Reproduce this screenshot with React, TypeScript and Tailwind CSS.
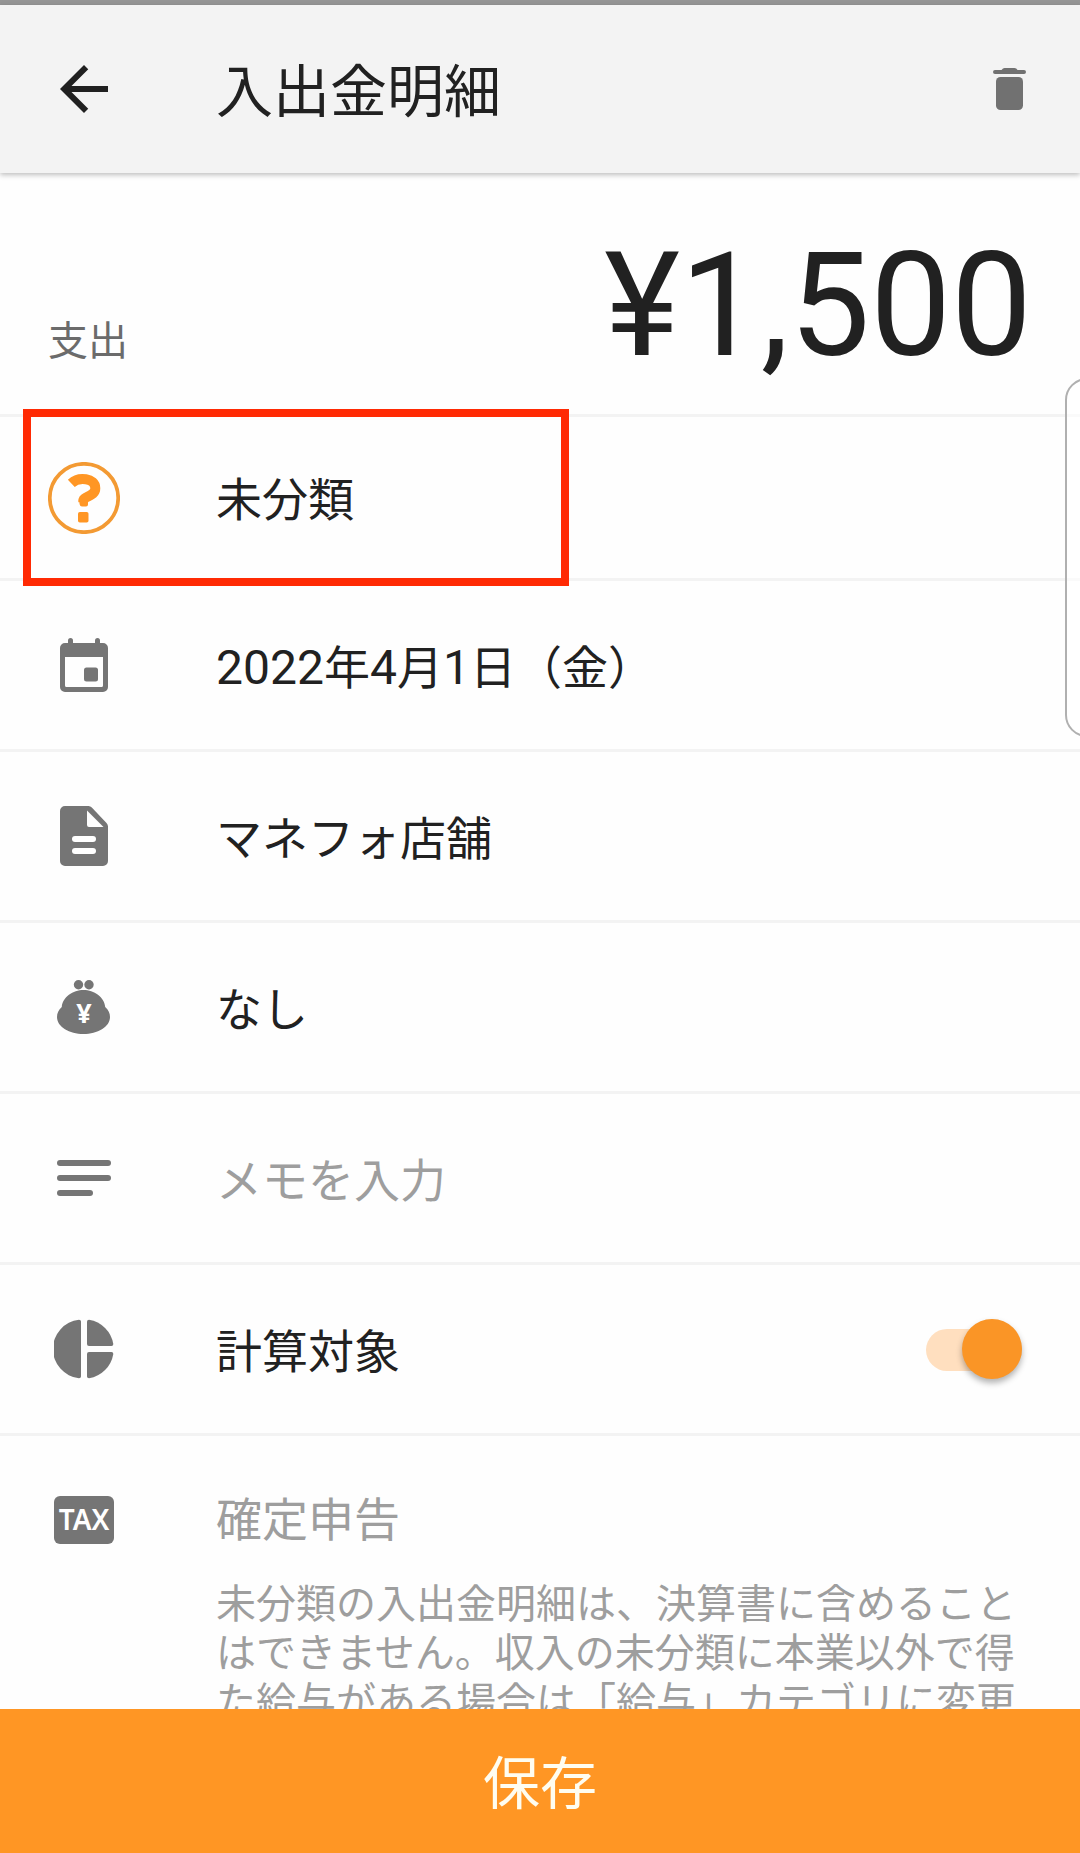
import type { ReactNode } from "react";

const ArrowBack = () => (
  <svg viewBox="0 0 24 24" className="h-[72px] w-[72px] fill-[#202020]">
    <path d="M20 11H7.83l5.59-5.59L12 4l-8 8 8 8 1.41-1.41L7.83 13H20v-2z" />
  </svg>
);

const TrashIcon = () => (
  <svg viewBox="0 0 34 42" className="h-[42px] w-[34px] fill-[#717171]">
    <path d="M2 2h6.500Q10 0 11.500 0h10Q23.500 0 24.500 2H31a2 2 0 0 1 0 4H2a2 2 0 0 1 0-4z" />
    <rect x="3" y="9" width="27" height="33" rx="4.500" />
  </svg>
);

const QuestionIcon = () => (
  <svg viewBox="0 0 72 72" className="h-[72px] w-[72px]" fill="none">
    <circle cx="36" cy="36" r="34.200" stroke="#f39a33" strokeWidth="3.700" />
    <path
      d="M23.300 21.300C30.500 14.500 47.300 15.800 47.300 26.200C47.300 35 34.500 34 35.300 39.500V40"
      stroke="#ff9624"
      strokeWidth="10"
      strokeLinejoin="round"
    />
    <path d="M31 38.500H40V42.500Q40 44.500 38 44.500H34Q32 44.500 31.700 42.500z" fill="#ff9624" />
    <rect x="30" y="50" width="10.500" height="10.500" rx="1.800" fill="#ff9624" />
  </svg>
);

const CalendarIcon = () => (
  <svg viewBox="0 0 48 54" className="h-[54px] w-[48px] fill-[#757575]">
    <rect x="8" y="0" width="5" height="10" rx="2.500" />
    <rect x="35" y="0" width="5" height="10" rx="2.500" />
    <path
      fillRule="evenodd"
      d="M5 5h38a5 5 0 0 1 5 5v39a5 5 0 0 1-5 5H5a5 5 0 0 1-5-5V10a5 5 0 0 1 5-5zM5 19v28.500Q5 49 6.500 49h35Q43 49 43 47.500V19z"
    />
    <rect x="24" y="29.500" width="14" height="14" rx="2.500" />
  </svg>
);

const FileIcon = () => (
  <svg viewBox="0 0 48 60" className="h-[60px] w-[48px] fill-[#757575]">
    <path
      fillRule="evenodd"
      d="M5 0h23.500q2 0 3.300 1.500L46.500 17Q48 18.500 48 20.500V55a5 5 0 0 1-5 5H5a5 5 0 0 1-5-5V5a5 5 0 0 1 5-5zM27 4.500V19q0 2 2 2h14.500z"
    />
    <rect x="12" y="30" width="24" height="6" rx="3" fill="#fff" />
    <rect x="12" y="42" width="24" height="6" rx="3" fill="#fff" />
  </svg>
);

const PurseIcon = () => (
  <svg viewBox="0 0 54 54" className="h-[54px] w-[54px] fill-[#757575]">
    <circle cx="21.500" cy="4.700" r="4.700" />
    <circle cx="32" cy="4.700" r="4.700" />
    <path d="M26.500 10C37 10 47.500 17 48.200 27C51.500 30 53 33 53 37C53 47 40.500 54 26.500 54S0 47 0 37C0 33 1.500 30 4.800 27C5.500 17 16 10 26.500 10z" />
    <text
      x="27"
      y="43"
      fill="#fff"
      textAnchor="middle"
      className="font-['Noto_Sans',sans-serif] text-[27px] font-bold"
    >
      ¥
    </text>
  </svg>
);

const MemoIcon = () => (
  <svg viewBox="0 0 54 36" className="h-[36px] w-[54px] fill-[#757575]">
    <rect width="54" height="6" rx="3" />
    <rect y="15" width="54" height="6" rx="3" />
    <rect y="30" width="36" height="6" rx="3" />
  </svg>
);

const PieIcon = () => (
  <svg viewBox="0 0 60 60" className="h-[60px] w-[60px] fill-[#757575]">
    <path d="M27 2.500Q27 .7 25 .7A29.500 29.500 0 0 0 25 59.300Q27 59.300 27 57.500z" />
    <path d="M33 2.500Q33 .7 35 .7A29.500 29.500 0 0 1 59.300 25Q59.300 27 57.500 27H35Q33 27 33 25z" />
    <path d="M33 57.500Q33 59.300 35 59.300A29.500 29.500 0 0 0 59.300 35Q59.300 33 57.500 33H35Q33 33 33 35z" />
  </svg>
);

const TaxIcon = () => (
  <div className="flex h-12 w-[60px] items-center justify-center rounded-[6px] bg-[#757575] pb-0.5 font-['Noto_Sans',sans-serif] text-[28px] leading-none font-semibold text-white">
    TAX
  </div>
);

type RowProps = {
  icon: ReactNode;
  children: ReactNode;
  muted?: boolean;
  trailing?: ReactNode;
};

function Row({ icon, children, muted, trailing }: RowProps) {
  return (
    <div className="flex h-[171px] items-center border-b-[3px] border-[#f3f3f3]">
      <div className="flex w-[168px] shrink-0 justify-center">{icon}</div>
      <div className={`ml-12 flex-1 pt-[5px] text-[46px] leading-none ${muted ? "text-[#9e9e9e]" : "text-[#212121]"}`}>
        {children}
      </div>
      {trailing}
    </div>
  );
}

function Toggle() {
  return (
    <div className="mt-0.5 mr-[58px] flex h-[42px] w-24 items-center justify-end rounded-full bg-[#ffdfbf]">
      <div className="mb-0.5 h-[60px] w-[60px] shrink-0 rounded-full bg-[#fa9526] shadow-[0_4px_6px_rgba(0,0,0,0.3)]" />
    </div>
  );
}

const Num = ({ children }: { children: ReactNode }) => <span className="text-[48px]">{children}</span>;

export default function App() {
  return (
    <div className="relative flex h-[1853px] w-[1080px] flex-col overflow-hidden bg-[#fefefe] font-[Roboto,'Noto_Sans_CJK_JP',sans-serif] text-[#212121]">
      <div className="h-[5px] shrink-0 bg-[#959595]" />
      <header className="z-10 flex h-[168px] shrink-0 items-center bg-[#f3f3f3] pl-12 shadow-[0_2px_5px_rgba(0,0,0,0.25)]">
        <ArrowBack />
        <h1 className="ml-24 flex-1 pt-[7px] text-[57px] leading-none">入出金明細</h1>
        <div className="mr-[53px]">
          <TrashIcon />
        </div>
      </header>

      <main className="min-h-0 flex-1 overflow-hidden">
        <section className="flex h-[244px] items-baseline justify-between border-b-[3px] border-[#f3f3f3] px-12 pt-[61px]">
          <span className="text-[40px] leading-none text-[#6b6b6b]">支出</span>
          <span className="text-[144px] leading-none">¥1,500</span>
        </section>

        <div className="relative flex h-[164px] items-center border-b-[3px] border-[#f3f3f3]">
          <div className="flex w-[168px] justify-center">
            <QuestionIcon />
          </div>
          <div className="ml-12 pt-[5px] text-[46px] leading-none">未分類</div>
          {/* highlight frame over the category row */}
          <div className="absolute top-[-8px] left-[23px] h-[177px] w-[546px] border-8 border-[#ff2a04]" />
        </div>

        <Row icon={<CalendarIcon />}>
          <Num>2022</Num>年<Num>4</Num>月<Num>1</Num>日（金）
        </Row>
        <Row icon={<FileIcon />}>マネフォ店舗</Row>
        <Row icon={<PurseIcon />}>なし</Row>
        <Row icon={<MemoIcon />} muted>
          メモを入力
        </Row>
        <Row icon={<PieIcon />} trailing={<Toggle />}>
          計算対象
        </Row>

        <section className="flex text-[#9e9e9e]">
          <div className="flex w-[168px] shrink-0 justify-center pt-[60px]">
            <TaxIcon />
          </div>
          <div className="ml-12 pt-[61px]">
            <div className="text-[46px] leading-[46px]">確定申告</div>
            <p className="mt-[37px] text-[40px] leading-[49px] whitespace-nowrap">
              未分類の入出金明細は、決算書に含めること
              <br />
              はできません。収入の未分類に本業以外で得
              <br />
              た給与がある場合は「給与」カテゴリに変更
            </p>
          </div>
        </section>
      </main>

      <button className="flex h-36 shrink-0 items-center justify-center bg-[#ff9624] pt-1.5 text-[57px] leading-none text-[#fffdf0]">
        保存
      </button>

      {/* edge panel handle */}
      <div className="absolute top-[378px] left-[1065px] h-[359px] w-[60px] rounded-[22px] border-2 border-[#b0b0b0] bg-white/60" />
    </div>
  );
}
